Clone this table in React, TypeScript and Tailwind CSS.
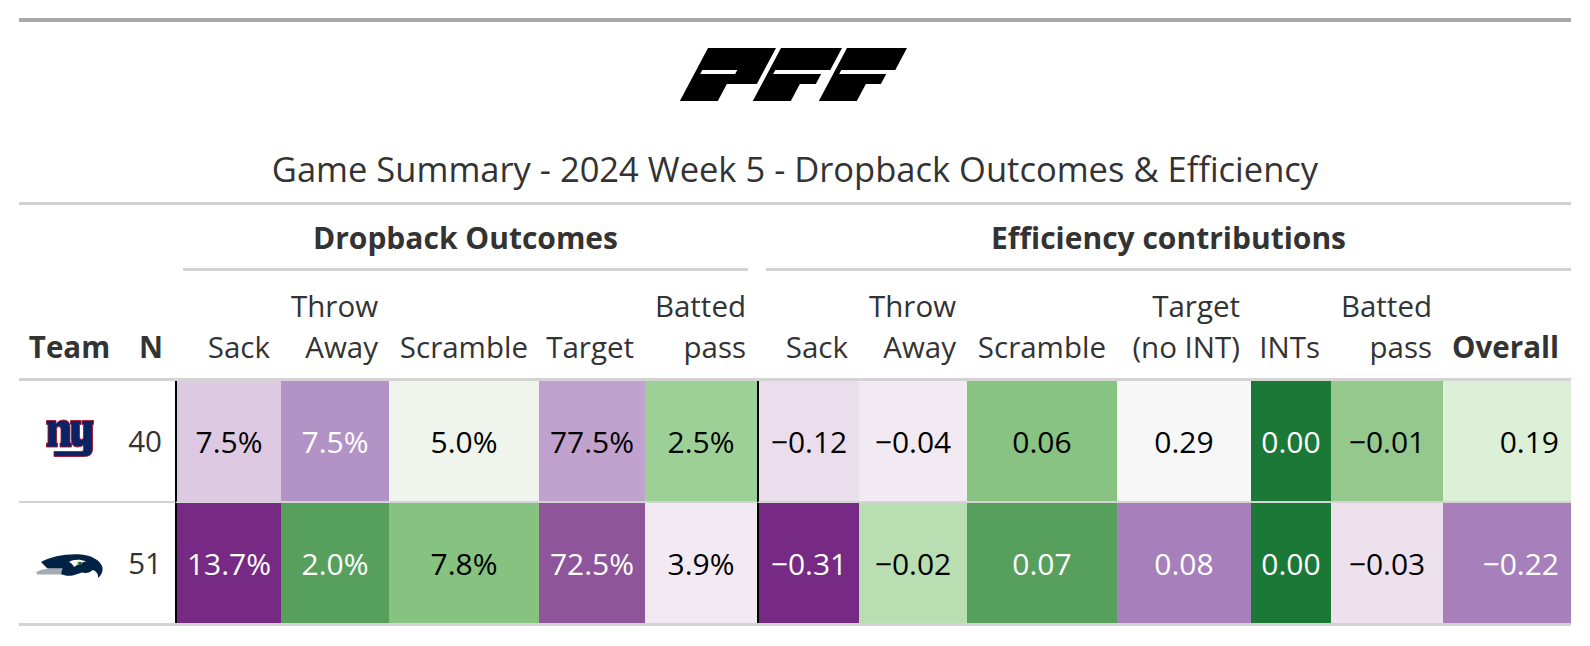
import React from 'react';

// column widths (px) — black rule is folded into the two "Sack" columns
const COLS =
  'grid grid-cols-[101px_55px_106px_108px_150px_106px_112px_102px_108px_150px_134px_80px_112px_128px]';

type Cell = { v: string; bg: string; light?: boolean };

const rows: { team: 'nyg' | 'sea'; n: number; cells: Cell[] }[] = [
  {
    team: 'nyg',
    n: 40,
    cells: [
      { v: '7.5%', bg: 'bg-[#dec9e2]' },
      { v: '7.5%', bg: 'bg-[#b393c5]', light: true },
      { v: '5.0%', bg: 'bg-[#eff4ec]' },
      { v: '77.5%', bg: 'bg-[#c1a1cd]' },
      { v: '2.5%', bg: 'bg-[#9dd096]' },
      { v: '\u22120.12', bg: 'bg-[#eadeec]' },
      { v: '\u22120.04', bg: 'bg-[#f2eaf3]' },
      { v: '0.06', bg: 'bg-[#88c381]' },
      { v: '0.29', bg: 'bg-[#f7f7f7]' },
      { v: '0.00', bg: 'bg-[#1b7837]', light: true },
      { v: '\u22120.01', bg: 'bg-[#94c88d]' },
      { v: '0.19', bg: 'bg-[#dcf0d8]' },
    ],
  },
  {
    team: 'sea',
    n: 51,
    cells: [
      { v: '13.7%', bg: 'bg-[#762a83]', light: true },
      { v: '2.0%', bg: 'bg-[#569f5c]', light: true },
      { v: '7.8%', bg: 'bg-[#86c280]' },
      { v: '72.5%', bg: 'bg-[#8e559b]', light: true },
      { v: '3.9%', bg: 'bg-[#f2e9f2]' },
      { v: '\u22120.31', bg: 'bg-[#762a83]', light: true },
      { v: '\u22120.02', bg: 'bg-[#b9deb2]' },
      { v: '0.07', bg: 'bg-[#569f5c]', light: true },
      { v: '0.08', bg: 'bg-[#a77fba]', light: true },
      { v: '0.00', bg: 'bg-[#1b7837]', light: true },
      { v: '\u22120.03', bg: 'bg-[#ede1ee]' },
      { v: '\u22120.22', bg: 'bg-[#a77fba]', light: true },
    ],
  },
];

const labels: string[][] = [
  ['Sack'],
  ['Throw', 'Away'],
  ['Scramble'],
  ['Target'],
  ['Batted', 'pass'],
  ['Sack'],
  ['Throw', 'Away'],
  ['Scramble'],
  ['Target', '(no INT)'],
  ['INTs'],
  ['Batted', 'pass'],
];

function PffLogo() {
  return (
    <svg width="227" height="53" viewBox="0 0 227 53">
      <g transform="translate(28 0) skewX(-28)" fill="#000" fillRule="evenodd">
        <path d="M0 0H68V36H38V53H0Z M6 22H41V26H6Z" />
        <path d="M73 0H134V22H79V26H127V36H111V53H73Z" />
        <path d="M139 0H199V22H145V26H192V36H177V53H139Z" />
      </g>
    </svg>
  );
}

function GiantsLogo() {
  return (
    <svg width="48" height="38" viewBox="0 0 48 38">
      <g fill="#0b2265" stroke="#a71930" strokeWidth="0.9">
        <path d="M0.5 1.5H10V5Q12.5 1 17.5 1Q24 1 24 8V24H25.5V28H14V24H15V10.5Q15 7.5 12.5 7.5Q10.5 7.5 10.5 10.5V24H11.5V28H0.5V24H2V5.5H0.5Z" />
        <path d="M24.5 1.5H35V5.5H33.5V18Q33.5 20.5 35.5 20.5Q37.5 20.5 37.5 18V5.5H36V1.5H47.5V5.5H46.5V30Q46.5 37.5 38.5 37.5H8V32.5H35.5Q37.5 32.5 37.5 30.5V26Q35.5 28 31.5 28Q25.5 28 25.5 21.5V5.5H24.5Z" />
      </g>
    </svg>
  );
}

function SeahawksLogo() {
  return (
    <svg width="68" height="26" viewBox="0 0 68 26">
      <path d="M0 19.5C3 17 7 16 13 16H27L25 21.5H1.5Z" fill="#a5acaf" />
      <path
        d="M5 9C15 3.5 30 0.5 45 1.5C55 2.5 63 6.5 66 13C67.5 17 66 21.5 62 25C62.5 21 60.5 18 56.5 17C54.5 19.5 50.5 20.5 46 19.5L40 21.5C35 23.5 29 23 25 21L26.5 15.5H11.5Z"
        fill="#002244"
      />
      <path d="M33 9C37 6.5 44 6 50 8.5C46 9.5 42 11 38 14C37 11.5 35 10 33 9Z" fill="#ffffff" />
      <ellipse cx="43.5" cy="10" rx="2.6" ry="1.6" fill="#69be28" />
      <circle cx="44" cy="10" r="0.9" fill="#002244" />
    </svg>
  );
}

export default function App() {
  return (
    <div className="min-h-[646px] bg-white font-['Open_Sans',sans-serif] text-[#333333]">
      <div className="ml-[19px] w-[1552px] pt-[18px]">
        {/* title block */}
        <div className="flex flex-col items-center border-t-4 border-[#a8a8a8]">
          <div className="mt-[26px] mr-[3px] h-[53px]">
            <PffLogo />
          </div>
          <div className="mt-[47px] mb-[12px] text-[34.5px] leading-[42px]">
            Game Summary - 2024 Week 5 - Dropback Outcomes &amp; Efficiency
          </div>
        </div>

        {/* spanners */}
        <div className={`${COLS} border-t-[3px] border-[#d3d3d3] text-[30px] font-bold`}>
          <div className="col-span-2" />
          <div className="col-span-5 pl-[8px] pr-[9px]">
            <div className="border-b-[3px] border-[#d3d3d3] pt-[13px] pb-[10px] text-center leading-[40px]">
              Dropback Outcomes
            </div>
          </div>
          <div className="col-span-7 pl-[9px]">
            <div className="border-b-[3px] border-[#d3d3d3] pt-[13px] pb-[10px] text-center leading-[40px]">
              Efficiency contributions
            </div>
          </div>
        </div>

        {/* column labels */}
        <div className={`${COLS} h-[110px] border-b-[3px] border-[#d3d3d3] text-[29.5px] leading-[41px]`}>
          <div className="flex items-end justify-center pb-[11px] font-bold">Team</div>
          <div className="flex items-end justify-end pr-[12px] pb-[11px] font-bold">N</div>
          {labels.map((l, i) => (
            <div key={i} className="flex flex-col items-end justify-end pr-[11px] pb-[11px] text-right">
              {l.map((t) => (
                <span key={t}>{t}</span>
              ))}
            </div>
          ))}
          <div className="flex items-end justify-end pr-[12px] pb-[11px] font-bold">Overall</div>
        </div>

        {/* body */}
        <div className="border-b-[3px] border-[#d3d3d3] text-[30px]">
          {rows.map((r, ri) => (
            <div key={r.team} className={`${COLS} ${ri === 0 ? 'h-[122px]' : 'h-[120px]'}`}>
              <div
                className={`flex items-center justify-center ${ri === 0 ? 'border-b-2 border-[#d3d3d3] pb-[6px]' : 'pt-[6px]'}`}
              >
                {r.team === 'nyg' ? <GiantsLogo /> : <SeahawksLogo />}
              </div>
              <div
                className={`flex items-center justify-end pr-[13px] text-[29.5px] ${ri === 0 ? 'border-b-2 border-[#d3d3d3]' : ''}`}
              >
                {r.n}
              </div>
              {r.cells.map((c, ci) => (
                <div
                  key={ci}
                  className={`flex items-center ${ci === 11 ? 'justify-end pr-[12px]' : 'justify-center'} ${c.bg} ${
                    c.light ? 'text-white' : 'text-black'
                  } ${ci === 0 || ci === 5 ? 'border-l-2 border-l-black' : ''} ${
                    ri === 0 ? 'border-b-2 border-b-[#d3d3d3]' : ''
                  }`}
                >
                  {c.v}
                </div>
              ))}
            </div>
          ))}
        </div>
      </div>
    </div>
  );
}
